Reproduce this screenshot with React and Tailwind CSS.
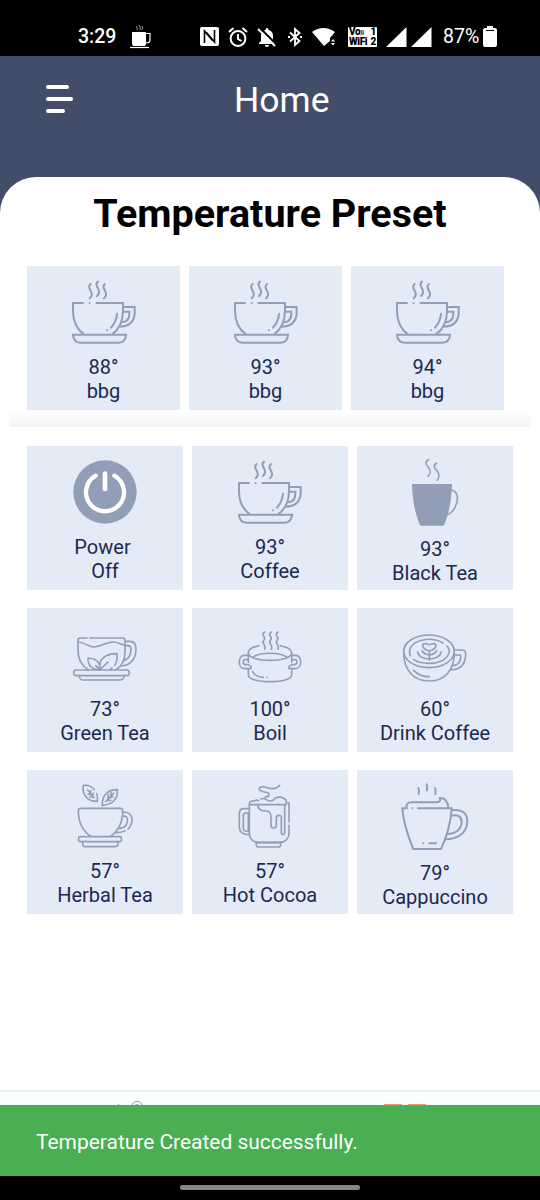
const LineIcon = ({ viewBox, width = 4.8, children }) => (
    <svg
        viewBox={viewBox}
        className="w-[72px] h-[84px] shrink-0"
        fill="none"
        stroke="#929eb7"
        strokeWidth={width}
        strokeLinecap="round"
        strokeLinejoin="round"
    >
        {children}
    </svg>
)

const CoffeeIcon = () => (
    <LineIcon viewBox="148 18 216 252" width={6}>
        <g strokeLinecap="butt" strokeLinejoin="miter">
            <path d="M195 129H163V152C163 184 176 209 196 223" />
            <path d="M231 129H313V152C313 184 300 209 280 223" />
            <path d="M313 141H348V160C348 185 330 200 303 200" />
            <path d="M313 155H332V161C332 176 324 186 309 187" />
            <path d="M163 224H322V227C320 240 312 248 300 248H185C173 248 165 240 163 227Z" />
        </g>
        <path d="M295 161C294 180 286 193 277 203" />
        <path d="M213 130h.1M265 211h.1" />
        <path d="M216 72C208 78 212 86 216 92C221 101 220 109 213 115" />
        <path d="M238 65C230 71 234 79 238 85C243 94 242 102 235 108" />
        <path d="M259 72C251 78 255 86 259 92C264 101 263 109 256 115" />
    </LineIcon>
)

const PowerIcon = () => (
    <LineIcon viewBox="147 17 216 252">
        <circle cx="255" cy="155" r="95" fill="#929eb7" stroke="none" />
        <path d="M227 106A57 57 0 1 0 283 106" stroke="white" strokeWidth="13" />
        <path d="M255 100V146" stroke="white" strokeWidth="14" />
    </LineIcon>
)

const BlackTeaIcon = () => (
    <LineIcon viewBox="642 18 216 252">
        <path d="M681 132H801C800 180 791 225 776 257H706C691 225 682 180 681 132Z" fill="#929eb7" stroke="none" />
        <path d="M800 150C816 153 821 172 814 192C808 210 799 219 788 224" />
        <path d="M731 59C719 65 722 74 729 80C737 89 738 101 729 109" />
        <path d="M755 70C744 75 747 84 755 91C763 99 765 111 756 121" />
    </LineIcon>
)

const GreenTeaIcon = () => (
    <LineIcon viewBox="147 23 216 252">
        <path d="M201 113H181Q174 113 174 120V150C174 180 187 198 205 208" />
        <path d="M210 113H308Q315 113 315 120V155C315 180 303 199 288 208" />
        <path d="M174 125C198 127 205 140 222 140C245 140 255 125 280 125C295 125 300 133 315 134" />
        <path d="M316 123H330C342 123 348 132 348 145C348 172 335 196 303 197" />
        <path d="M316 136H322C330 136 333 141 333 147C333 161 327 176 311 181" />
        <rect x="161" y="209" width="167" height="17" rx="8" />
        <path d="M178 226C178 234 184 239 190 239H300C306 239 312 234 312 226" />
        <path d="M240 208C241 185 227 173 204 174C203 196 216 208 240 208" />
        <path d="M240 208C234 177 255 160 291 160C292 182 289 190 284 195M276 203Q274 206 270 207" />
        <path d="M240 208L264 185M240 208L227 196" />
    </LineIcon>
)

const BoilIcon = () => (
    <LineIcon viewBox="147 23 216 252">
        <path d="M222 136C202 140 190 148 190 158C190 172 220 180 255 180S320 172 320 158C320 148 308 140 286 136" />
        <path d="M205 170C225 155 285 155 305 170" />
        <path d="M190 158V186M190 206V224C190 237 220 244 255 244S320 237 320 224V206M320 186V158" />
        <path d="M190 165H178C158 165 157 205 180 205H198V198L190 193H182C172 193 172 178 180 178H190" />
        <path d="M320 165H332C352 165 353 205 330 205H312V198L320 193H328C338 193 338 178 330 178H320" />
        <path d="M203 214C208 225 220 230 235 231M246 231h.1" />
        <path d="M239 95C224 106 246 110 237 119C226 129 246 134 239 147" />
        <path d="M259 95C244 106 266 110 257 119C246 129 266 134 259 147" />
        <path d="M279 95C264 106 286 110 277 119C266 129 286 134 279 147" />
    </LineIcon>
)

const DrinkCoffeeIcon = () => (
    <LineIcon viewBox="642 23 216 252">
        <ellipse cx="732" cy="153" rx="76" ry="49" />
        <path d="M656 155C656 215 690 242 733 242S808 215 808 155" />
        <path d="M774 128C740 108 690 117 676 143Q671 154 676 166M686 178C710 193 757 193 778 177Q803 157 786 137" />
        <path d="M808 149H832Q842 149 842 160C842 191 830 208 797 208" />
        <path d="M808 164H824Q828 164 827 171C826 187 820 195 803 196" />
        <path d="M686 210C698 223 715 229 733 229" />
        <path d="M733 152C711 146 708 130 720 130Q728 130 733 134Q738 130 746 130C758 130 755 146 733 152V179" />
        <path d="M711 152Q718 162 733 164Q748 162 755 152M698 155C699 168 715 176 733 176S767 168 768 155" />
    </LineIcon>
)

const HerbalTeaIcon = () => (
    <LineIcon viewBox="147 14 216 252">
        <path d="M182 129H302Q308 129 308 136C308 170 295 197 271 213M213 213C188 197 175 170 175 136Q175 129 182 129" />
        <path d="M308 141C329 138 338 152 336 169Q333 184 324 191M316 196Q306 202 288 202" />
        <path d="M308 153C321 150 324 159 322 169C320 181 310 188 299 189" />
        <rect x="176" y="214" width="128" height="15" rx="4" />
        <path d="M188 229V236Q188 244 196 244H286Q294 244 294 236V229" />
        <path d="M223 73C215 62 205 58 190 60C186 86 201 109 232 108Q234 95 230 85" />
        <path d="M203 74L222 97M204 86L213 88M209 95L218 95M212 76L211 84M220 84L218 91" />
        <path d="M292 73C263 73 245 90 247 120C278 118 294 101 292 73Z" />
        <path d="M281 84L257 109M265 88L264 100M273 82L272 92M262 105L272 105M270 96L279 95" />
    </LineIcon>
)

const HotCocoaIcon = () => (
    <LineIcon viewBox="147 14 216 252">
        <path d="M284 60C275 73 255 71 242 66C225 60 214 72 231 78C242 82 254 80 252 88Q250 95 240 95" />
        <path d="M193 118V205C193 220 205 231 220 231H285C300 231 312 220 312 205V180M312 170V115" />
        <path d="M193 118Q193 104 209 107Q214 102 221 106M228 101C240 94 245 108 256 107Q266 106 270 99C286 91 306 98 304 113H312" />
        <path d="M196 118H304" />
        <path d="M193 130H176Q163 130 163 145V185C163 200 172 208 193 208" />
        <path d="M190 143H182Q175 143 175 150V190Q175 198 190 198Z" />
        <path d="M218 118C220 135 230 137 245 137C255 138 258 145 258 155V180Q258 188 266 188T274 180V157Q274 150 282 150T289 158V201Q289 208 294 208T299 201V118" />
        <path d="M214 232H287V238Q287 245 280 245H221Q214 245 214 238Z" />
    </LineIcon>
)

const CappuccinoIcon = () => (
    <LineIcon viewBox="642 14 216 252" width={6}>
        <path strokeLinejoin="miter" d="M665 129H652C655 175 670 215 685 251H768C785 215 797 175 800 129H699" />
        <path d="M665 129C662 118 668 111 680 111H752C764 111 768 107 764 98C780 96 790 112 790 129" />
        <path d="M682 129h.1M715 234h.1M733 234H753" />
        <path d="M800 135C831 129 848 145 847 170C845 205 815 222 782 222" />
        <path d="M797 151C820 146 831 155 830 172C828 192 812 205 788 206" />
        <path d="M700 68Q703 76 701 86M725 57Q728 65 726 75M750 68Q753 76 751 86" />
    </LineIcon>
)

const favourites = [
    { temp: "88°", name: "bbg" },
    { temp: "93°", name: "bbg" },
    { temp: "94°", name: "bbg" },
]

const presets = [
    { temp: "Power ", name: "Off", icon: PowerIcon },
    { temp: "93°", name: "Coffee", icon: CoffeeIcon },
    { temp: "93°", name: "Black Tea", icon: BlackTeaIcon, low: true },
    { temp: "73°", name: "Green Tea", icon: GreenTeaIcon },
    { temp: "100°", name: "Boil", icon: BoilIcon },
    { temp: "60°", name: "Drink Coffee", icon: DrinkCoffeeIcon },
    { temp: "57°", name: "Herbal Tea", icon: HerbalTeaIcon },
    { temp: "57°", name: "Hot Cocoa", icon: HotCocoaIcon },
    { temp: "79°", name: "Cappuccino", icon: CappuccinoIcon, low: true },
]

const PresetTile = ({ temp, name, icon: Icon = CoffeeIcon, low }) => (
    <button className="h-36 flex flex-col items-center bg-[#e3ebf6] text-[#1d2850]">
        <Icon />
        <span className={`${low ? "mt-[7px]" : "mt-[5px]"} text-[20px] leading-6 text-center whitespace-pre`}>
            {temp}
            <br />
            {name}
        </span>
    </button>
)

const StatusBar = () => (
    <div className="h-14 bg-black text-white flex items-center pl-[78px] pt-[17px] shrink-0">
        <span className="w-[52px] pt-px text-[19.5px] leading-5 font-medium">3:29</span>
        <svg viewBox="0 0 22 24" className="w-[22px] h-6" fill="white" stroke="white">
            <path d="M2 7H16V19L15 21H3L2 19Z" stroke="none" />
            <path d="M16 8.500H20V15Q20 18 16 18" fill="none" strokeWidth="1.2" />
            <path d="M0 22.500H19" strokeWidth="1.2" />
            <path d="M6 1Q8 3 7 5M9 0Q11 2 10 5M12 1Q13 3 12 5" fill="none" strokeWidth=".6" />
        </svg>
        <svg viewBox="0 0 19 19" className="w-[19px] h-[19px] ml-[48px]">
            <rect width="19" height="19" rx="2" fill="white" />
            <path d="M4.500 16V4L12.500 13.500M14.500 3V15L6.500 5.500" fill="none" stroke="black" strokeWidth="1.6" />
        </svg>
        <svg viewBox="0 0 20 20" className="w-5 h-5 ml-[9px]" fill="none" stroke="white" strokeWidth="2">
            <circle cx="10" cy="11.5" r="7.4" />
            <path d="M10 7V12L13.500 14M1 5L5.500 1M19 5L14.500 1" />
        </svg>
        <svg viewBox="0 0 20 20" className="w-5 h-5 ml-[9px]">
            <path d="M10 1Q11.500 1 11.500 3Q16 4 16 9V14L18 17H2V16L4 14V9Q4 4 8.500 3Q8.500 1 10 1ZM8 18H12Q12 20 10 20T8 18Z" fill="white" />
            <path d="M2 0L20 18" stroke="black" strokeWidth="2" />
            <path d="M1 2L18 19" stroke="white" strokeWidth="1.8" />
        </svg>
        <svg viewBox="0 0 14 20" className="w-[14px] h-5 ml-[11px]" fill="none" stroke="white" strokeWidth="1.8">
            <path d="M2 5.500L11.500 14L7 18V2L11.500 6L2 14.500" />
            <path d="M0 10h2M12 10h2" />
        </svg>
        <svg viewBox="0 0 24 20" className="w-6 h-5 ml-[10px]" fill="white">
            <path d="M0 5C7 -.5 16 -.5 23 5L18 11V14L12 19Z" />
            <path d="M19 14.500L21 12L23 14.500ZM19 16L21 18.500L23 16Z" />
        </svg>
        <div className="w-[29px] h-5 ml-[12px] bg-white text-black rounded-[1px] text-[10px] leading-[10px] font-black tracking-[-0.4px] px-px whitespace-nowrap">
            <div className="flex justify-between">
                <span>Vo<span className="text-[6px] align-top">))</span></span>
                <span>1</span>
            </div>
            <div className="flex justify-between">
                <span>WiFi</span>
                <span>2</span>
            </div>
        </div>
        <svg viewBox="0 0 46 20" className="w-[46px] h-5 ml-[9px]" fill="white">
            <path d="M0 20L20.500 0V20ZM25 20L45.500 0V20Z" />
        </svg>
        <span className="w-[40px] ml-[11px] pt-px text-[19.5px] leading-5">87%</span>
        <svg viewBox="0 0 14 21" className="w-[14px] h-[21px] -mt-px">
            <path d="M4 0H10V2H12Q14 2 14 4V19Q14 21 12 21H2Q0 21 0 19V4Q0 2 2 2H4Z" fill="white" />
            <path d="M3 4.500H11" stroke="black" />
        </svg>
    </div>
)

function App() {
    return (
        <div className="w-[540px] h-[1200px] flex flex-col overflow-hidden bg-white font-['Roboto',sans-serif]">
            <StatusBar />

            <div className="bg-[#424d69] shrink-0">
                <header className="h-[120.5px] pt-[28px] pl-[46px] flex items-start text-white">
                    <button className="flex flex-col gap-2 pt-px">
                        <span className="w-[23px] h-1 rounded-full bg-white" />
                        <span className="w-[27px] h-1 rounded-full bg-white" />
                        <span className="w-[19px] h-1 rounded-full bg-white" />
                    </button>
                    <h1 className="ml-[161px] text-[35.5px] leading-8">Home</h1>
                </header>
                <div className="h-[89px] rounded-t-[36px] bg-white">
                    <h2 className="pt-[13px] text-center text-[39.5px] leading-[47px] font-bold text-black">Temperature Preset</h2>
                </div>
            </div>

            <section className="mx-[9px] h-[161.5px] px-[18px] shrink-0 bg-linear-to-b from-white from-90% to-[#f3f3f3]">
                <div className="grid grid-cols-[153px_153px_153px] gap-[9px]">
                    {favourites.map((item) => <PresetTile key={item.temp} {...item} />)}
                </div>
            </section>

            <main className="flex-1 px-[27px] pt-[18.5px]">
                <div className="grid grid-cols-3 gap-x-[9px] gap-y-[18px]">
                    {presets.map((item) => <PresetTile key={item.name} {...item} />)}
                </div>
            </main>

            <nav className="h-[15px] shrink-0 border-t-2 border-[#e9edf4] bg-[#fcfdfd] flex items-end overflow-hidden">
                <svg viewBox="0 0 30 5" className="w-[30px] h-[5px] ml-[117px]" fill="none" stroke="#8995ae">
                    <path d="M1 4.500H2" />
                    <circle cx="20" cy="7" r="5.500" />
                    <circle cx="20" cy="7" r="2.500" />
                </svg>
                <span className="w-[18px] h-px ml-[237px] bg-[#ee9b75]" />
                <span className="w-[18px] h-px ml-[6px] bg-[#ee9b75]" />
            </nav>

            <div className="h-[71px] shrink-0 bg-[#4aae52] text-white flex items-center px-9 pt-[4px] text-[20.95px]">
                Temperature Created successfully.
            </div>

            <div className="h-6 shrink-0 bg-black flex justify-center pt-[9px]">
                <span className="w-[180px] h-[5px] rounded-full bg-[#868686]" />
            </div>
        </div>
    )
}

export default App
